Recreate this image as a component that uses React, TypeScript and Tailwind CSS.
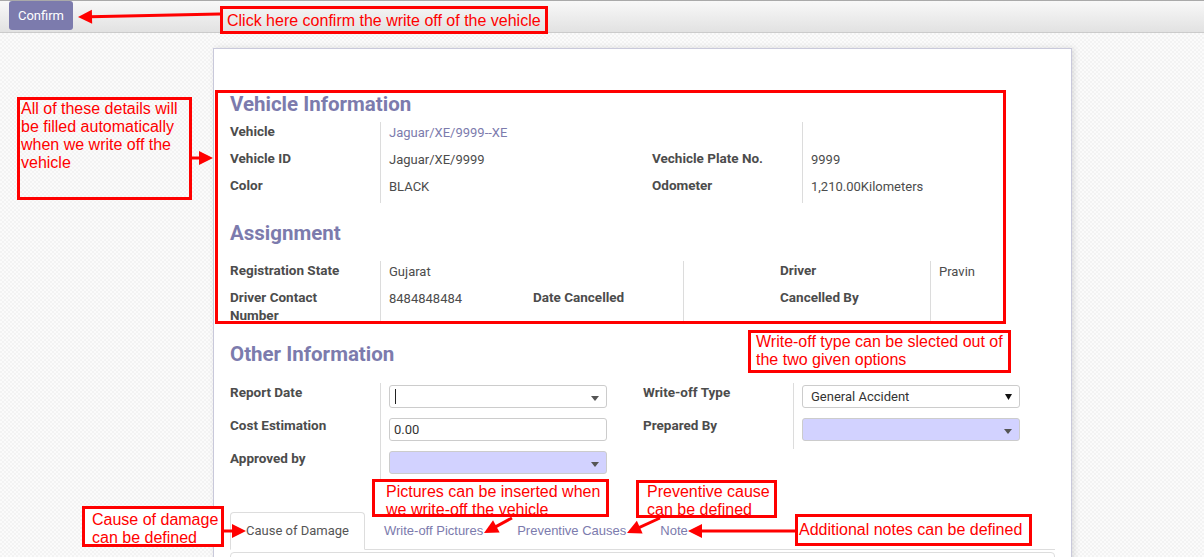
import React from "react";

const L = ({ children }: { children?: React.ReactNode }) => (
  <div className="pr-1 text-[13.5px] font-bold leading-[18px] text-[#4c4c4c]">{children}</div>
);
const V = ({ children, link }: { children?: React.ReactNode; link?: boolean }) => (
  <div
    className={
      link
        ? "border-l border-[#dcdcdc] pl-[8px] pt-[2px] text-[13px] leading-[18px] text-[#7c7bad]"
        : "border-l border-[#dcdcdc] pl-[8px] pt-[2px] text-[13px] leading-[18px] text-[#4c4c4c]"
    }
  >
    {children}
  </div>
);
const F = ({ children }: { children?: React.ReactNode }) => (
  <div className="border-l border-[#dcdcdc] pl-[8px] pt-[2px]">{children}</div>
);
const Caret = () => (
  <svg width="8" height="5" viewBox="0 0 8 5" className="absolute right-[7px] top-[10px]">
    <path d="M0 0 L8 0 L4 5 Z" fill="#555" />
  </svg>
);

function arrowHead(x1: number, y1: number, x2: number, y2: number, len = 14, half = 7) {
  const dx = x2 - x1;
  const dy = y2 - y1;
  const n = Math.hypot(dx, dy);
  const ux = dx / n;
  const uy = dy / n;
  const bx = x2 - ux * len;
  const by = y2 - uy * len;
  const px = -uy * half;
  const py = ux * half;
  return {
    line: { x1, y1, x2: bx + ux * 2, y2: by + uy * 2 },
    pts: `${x2},${y2} ${bx + px},${by + py} ${bx - px},${by - py}`,
  };
}

const arrows = [
  [220, 14, 78, 17],
  [192, 158, 213, 158],
  [512, 518, 484, 533],
  [660, 518, 627, 533],
  [795, 531, 688, 531],
  [224, 531, 246, 531],
];

const Box = ({ cls, children }: { cls: string; children?: React.ReactNode }) => (
  <div className={"absolute border-[3px] border-[#ff0000] text-[16px] leading-[18px] text-[#ff0000] " + cls}>{children}</div>
);

export default function App() {
  return (
    <div className="relative h-[557px] w-[1204px] overflow-hidden font-['Roboto',sans-serif] bg-[#f7f7f7]">
      {/* top bar */}
      <div className="flex h-[33px] items-start border-t border-b border-t-[#a9a9a9] border-b-[#cbcbcb] bg-gradient-to-b from-[#f8f8f8] to-[#e2e2e2] pl-[9px]">
        <button className="h-[29px] w-[64px] rounded-[3px] bg-[#7c7bad] text-[13px] text-white">Confirm</button>
      </div>

      {/* main area */}
      <div className="h-[524px] bg-[image:repeating-conic-gradient(#f3f3f3_0%_25%,#fbfbfb_0%_50%)] bg-[length:4px_4px] pt-[15px]">
        <div className="ml-[213px] h-[600px] w-[859px] border border-[#c9c9db] bg-white px-[16px] pt-[43px] shadow-[2px_0_6px_rgba(0,0,0,0.12)]">
          <div className="text-[20.5px] font-bold leading-[24px] text-[#7c7bad]">Vehicle Information</div>
          <div className="mt-[6px] grid auto-rows-[27px] grid-cols-[150px_272px_150px_1fr]">
            <L>Vehicle</L>
            <V link>Jaguar/XE/9999--XE</V>
            <div />
            <V />
            <L>Vehicle ID</L>
            <V>Jaguar/XE/9999</V>
            <L>Vechicle Plate No.</L>
            <V>9999</V>
            <L>Color</L>
            <V>BLACK</V>
            <L>Odometer</L>
            <V>1,210.00Kilometers</V>
          </div>

          <div className="mt-[18px] text-[20.5px] font-bold leading-[24px] text-[#7c7bad]">Assignment</div>
          <div className="mt-[16px] grid grid-cols-[150px_153px_150px_97px_150px_1fr] grid-rows-[27px_36px]">
            <L>Registration State</L>
            <V>Gujarat</V>
            <div />
            <V />
            <L>Driver</L>
            <V>Pravin</V>
            <L>
              Driver Contact
              <br />
              Number
            </L>
            <V>8484848484</V>
            <L>Date Cancelled</L>
            <V />
            <L>Cancelled By</L>
            <V />
          </div>

          <div className="mt-[18px] text-[20.5px] font-bold leading-[24px] text-[#7c7bad]">Other Information</div>
          <div className="mt-[17px] grid grid-cols-[150px_263px_150px_1fr] grid-rows-[33px_33px_33px]">
            <L>Report Date</L>
            <F>
              <div className="relative flex h-[23px] w-[218px] items-center rounded-[3px] border border-[#cccccc] bg-white pl-[5px]">
                <div className="h-[15px] w-px bg-[#222]" />
                <Caret />
              </div>
            </F>
            <L>Write-off Type</L>
            <F>
              <div className="relative flex h-[23px] w-[218px] items-center rounded-[3px] border border-[#cccccc] bg-white pl-[8px] text-[13px] text-[#333]">
                General Accident
                <svg width="7" height="6" viewBox="0 0 7 6" className="absolute right-[7px] top-[8px]">
                  <path d="M0 0 L7 0 L3.5 6 Z" fill="#111" />
                </svg>
              </div>
            </F>
            <L>Cost Estimation</L>
            <F>
              <div className="flex h-[23px] w-[218px] items-center rounded-[3px] border border-[#cccccc] bg-white pl-[4px] text-[13px] text-[#333]">
                0.00
              </div>
            </F>
            <L>Prepared By</L>
            <F>
              <div className="relative h-[23px] w-[218px] rounded-[3px] border border-[#cccccc] bg-[#d2d2ff]">
                <Caret />
              </div>
            </F>
            <L>Approved by</L>
            <F>
              <div className="relative h-[23px] w-[218px] rounded-[3px] border border-[#cccccc] bg-[#d2d2ff]">
                <Caret />
              </div>
            </F>
            <div />
            <div />
          </div>

          {/* tabs */}
          <div className="mt-[30px] flex h-[38px] items-stretch border-b border-[#dddddd]">
            <div className="-mb-px flex items-center rounded-t-[4px] border border-[#dddddd] border-b-white bg-white px-[15px] text-[13px] text-[#555]">
              Cause of Damage
            </div>
            <div className="ml-[3px] flex items-center border border-transparent px-[15px] font-['Liberation_Sans',Arial,sans-serif] text-[13px] text-[#7c7bad]">Write-off Pictures</div>
            <div className="ml-[2px] flex items-center border border-transparent px-[15px] font-['Liberation_Sans',Arial,sans-serif] text-[13px] text-[#7c7bad]">Preventive Causes</div>
            <div className="ml-[2px] flex items-center border border-transparent px-[15px] font-['Liberation_Sans',Arial,sans-serif] text-[13px] text-[#7c7bad]">Note</div>
          </div>
          <div className="mt-[2px] h-[40px] rounded-t-[4px] border border-[#dddddd]" />
        </div>
      </div>

      {/* annotations */}
      <div className="font-['Liberation_Sans',Arial,sans-serif]">
        <Box cls="left-[215px] top-[90px] h-[234px] w-[791px]" />
        <Box cls="left-[220px] top-[6px] flex h-[28px] w-[328px] items-center pl-[4px] pt-[1px]">Click here confirm the write off of the vehicle</Box>
        <Box cls="left-[17px] top-[97px] h-[103px] w-[175px] pl-[1px]">
          All of these details will be filled automatically when we write off the vehicle
        </Box>
        <Box cls="left-[748px] top-[330px] h-[43px] w-[263px] pl-[5px]">
          Write-off type can be slected out of the two given options
        </Box>
        <Box cls="left-[372px] top-[479px] h-[38px] w-[237px] pl-[11px] pt-[1px]">
          Pictures can be inserted when
          <br />
          we write-off the vehicle
        </Box>
        <Box cls="left-[636px] top-[480px] h-[38px] w-[141px] pl-[8px]">
          Preventive cause
          <br />
          can be defined
        </Box>
        <Box cls="left-[795px] top-[514px] flex h-[32px] w-[237px] items-center pl-[1px]">Additional notes can be defined</Box>
        <Box cls="left-[82px] top-[506px] h-[41px] w-[142px] bg-white pl-[7px] pt-[2px]">
          Cause of damage
          <br />
          can be defined
        </Box>
      </div>

      <svg className="pointer-events-none absolute left-0 top-0" width="1204" height="557">
        {arrows.map(([a, b, c, d], i) => {
          const h = arrowHead(a, b, c, d);
          return (
            <g key={i}>
              <line {...h.line} stroke="#ff0000" strokeWidth="3" />
              <polygon points={h.pts} fill="#ff0000" />
            </g>
          );
        })}
      </svg>
    </div>
  );
}
